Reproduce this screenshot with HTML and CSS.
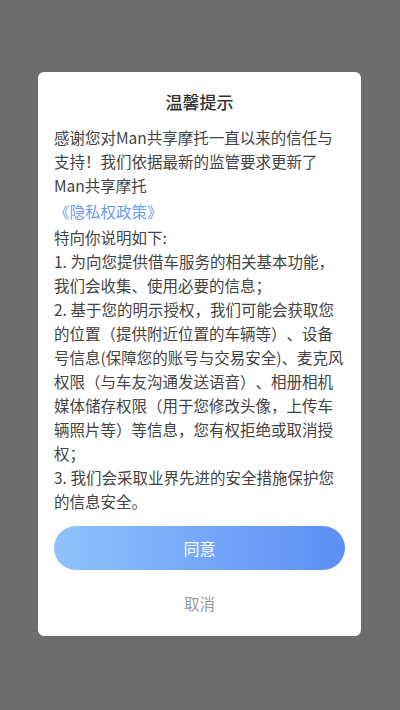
FILE: index.html
```html
<!DOCTYPE html>
<html lang="zh-CN">
<head>
  <meta charset="UTF-8" />
  <meta name="viewport" content="width=device-width, initial-scale=1.0" />
  <title>温馨提示</title>
  <link rel="stylesheet" href="styles.css">
</head>
<body>
  <div class="mask">
    <div class="dialog">
      <h2 class="dialog-title">温馨提示</h2>
      <div class="dialog-body">
        <p>感谢您对Man共享摩托一直以来的信任与支持！我们依据最新的监管要求更新了Man共享摩托</p>
        <p class="link">《隐私权政策》</p>
        <p class="intro">特向你说明如下:</p>
        <p>1. 为向您提供借车服务的相关基本功能，我们会收集、使用必要的信息；</p>
        <p>2. 基于您的明示授权，我们可能会获取您的位置（提供附近位置的车辆等）、设备号信息(保障您的账号与交易安全)、麦克风权限（与车友沟通发送语音）、相册相机媒体储存权限（用于您修改头像，上传车辆照片等）等信息，您有权拒绝或取消授权；</p>
        <p>3. 我们会采取业界先进的安全措施保护您的信息安全。</p>
      </div>
      <button class="btn-agree" id="agree-btn">同意</button>
      <button class="btn-cancel" id="cancel-btn">取消</button>
    </div>
  </div>
</body>
</html>
```

FILE: styles.css
```css
* {
  box-sizing: border-box;
}

body {
  margin: 0;
  font-family: "Noto Sans CJK SC", "Noto Sans", sans-serif;
  background: #6d6d6d;
}

.mask {
  min-height: 710px;
  padding: 72px 39px 0 38px;
}

.dialog {
  background: #fff;
  border-radius: 6px;
  padding: 18px 16px 10px;
  display: flex;
  flex-direction: column;
}

.dialog-title {
  margin: 0;
  text-align: center;
  font-size: 17px;
  font-weight: 500;
  line-height: 24px;
  color: #333;
}

.dialog-body {
  margin-top: 11px;
  font-size: 15.5px;
  line-height: 24px;
  color: #444;
  text-spacing-trim: space-all;
}

.dialog-body p {
  margin: 0;
}

.dialog-body .link {
  margin-top: 2px;
  color: #6b9cf2;
}

.dialog-body .intro {
  margin-top: 2px;
}

.btn-agree {
  margin-top: 13px;
  height: 44px;
  border: none;
  border-radius: 22px;
  background: linear-gradient(90deg, #8ec3fb, #5c8ef5);
  color: #fff;
  font-family: inherit;
  font-size: 16px;
  cursor: pointer;
}

.btn-cancel {
  margin-top: 10px;
  height: 46px;
  border: none;
  background: none;
  color: #9a9a9a;
  font-family: inherit;
  font-size: 15.5px;
  cursor: pointer;
}
```
